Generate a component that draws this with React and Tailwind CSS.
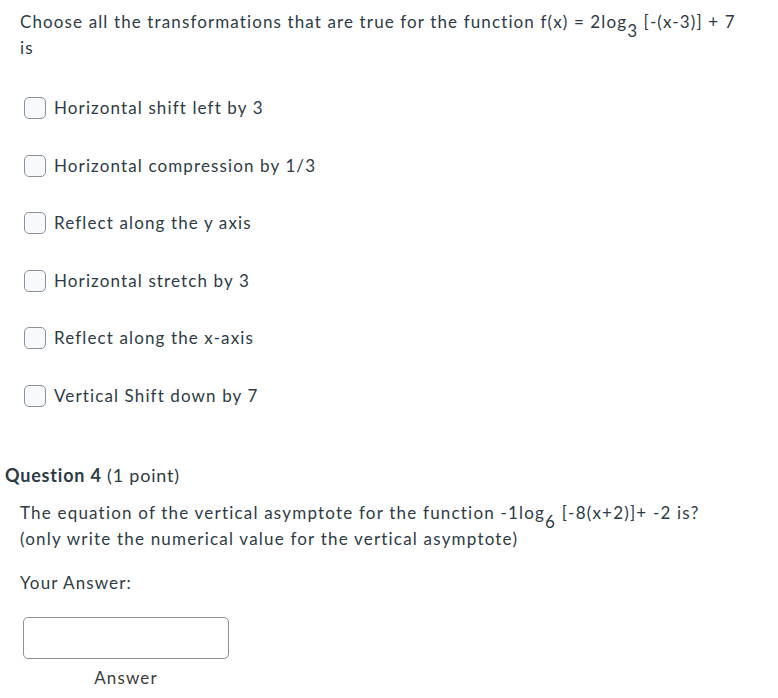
export default function App() {
  const options = [
    "Horizontal shift left by 3",
    "Horizontal compression by 1/3",
    "Reflect along the y axis",
    "Horizontal stretch by 3",
    "Reflect along the x-axis",
    "Vertical Shift down by 7",
  ];
  return (
    <div className="w-[778px] h-[698px] bg-white text-[#2d3b45] font-['Lato',sans-serif] overflow-hidden tracking-[1.12px]">
      <div className="pl-[20px] pt-[9px] text-[17px] leading-[26px]">
        Choose all the transformations that are true for the function f(x) = 2log<sub className="text-[17px] align-[-5px] leading-none">3</sub> [-(x-3)] + 7
        <br />
        is
      </div>
      <div className="flex flex-col gap-[35.5px] pl-[24px] pt-[36px]">
        {options.map((o) => (
          <div key={o} className="flex items-center h-[22px]">
            <div className="w-[22px] h-[22px] rounded-[5px] border border-[#8a9299] bg-[#f7f9fd]" />
            <span className="ml-[8px] text-[17px]">{o}</span>
          </div>
        ))}
      </div>
      <div className="pl-[5px] pt-[56px] text-[18px] leading-[24px] tracking-[0.8px]">
        <span className="font-bold">Question 4</span> (1 point)
      </div>
      <div className="pl-[20px] pt-[13px] text-[17px] leading-[26px] tracking-[1.2px]">
        The equation of the vertical asymptote for the function -1log<sub className="text-[17px] align-[-5px] leading-none">6</sub> [-8(x+2)]+ -2 is?
        <br />
        (only write the numerical value for the vertical asymptote)
      </div>
      <div className="pl-[20px] pt-[18px] text-[17px] leading-[26px]">Your Answer:</div>
      <div className="pl-[23px] pt-[21px] w-[229px]">
        <div className="w-[206px] h-[42px] rounded-[5px] border border-[#8a9299] bg-white" />
        <div className="text-center text-[17px] mt-[6px] text-[#3b3b3b]">Answer</div>
      </div>
    </div>
  );
}
